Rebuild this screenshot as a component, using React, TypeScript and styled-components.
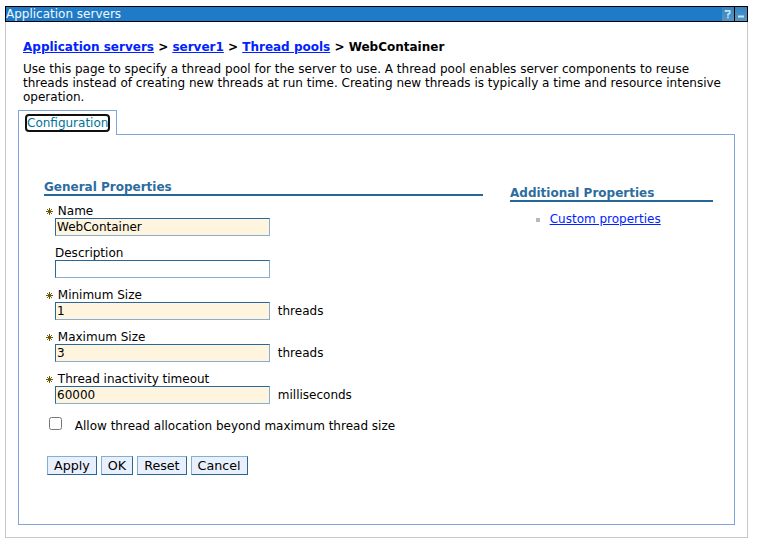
import React from "react";
import styled, { createGlobalStyle } from "styled-components";

const GlobalStyle = createGlobalStyle`
  * { box-sizing: border-box; }
  body {
    margin: 0;
    background: #fff;
    color: #000;
    font: 12px/14px "DejaVu Sans", Verdana, sans-serif;
  }
`;

const Page = styled.div`
  width: 757px;
  height: 547px;
  padding: 6px 9px 9px 5px;
  overflow: hidden;
`;

const Portlet = styled.section`
  height: 532px;
  display: flex;
  flex-direction: column;
`;

const TitleBar = styled.header`
  height: 16px;
  flex: none;
  display: flex;
  border: 1px solid #000;
  background: #1f7bc7;
  color: #f2f8fc;
`;

const Title = styled.span`
  flex: 1;
  line-height: 14px;
`;

const TitleButton = styled.span<{ $divided?: boolean }>`
  width: ${(p) => (p.$divided ? 13 : 12)}px;
  height: 14px;
  display: block;
  border-left: ${(p) => (p.$divided ? "1px solid #000" : "0")};
  background: linear-gradient(#3683c0, #5496c6);
  svg { display: block; }
`;

const Body = styled.div`
  flex: 1;
  padding: 18px 12px 12px;
  border: 1px solid #c8c8c8;
  border-top: 0;
  display: flex;
  flex-direction: column;
`;

const Breadcrumb = styled.nav`
  padding-left: 5px;
  font-weight: bold;
`;

const Link = styled.a`
  color: #0022ff;
  text-decoration: underline;
`;

const Intro = styled.p`
  margin: 8px 8px 6px 5px;
`;

const TabRow = styled.div`
  height: 25px;
  flex: none;
  display: flex;
`;

const Tab = styled.div`
  width: 99px;
  padding: 3px 6px 0;
  border: 1px solid #7ea6d9;
  border-bottom: 0;
`;

const TabLabel = styled.a`
  display: block;
  width: 85px;
  height: 18px;
  border: 2px solid #101010;
  border-radius: 4px;
  color: #007399;
  white-space: nowrap;
`;

const TabRest = styled.div`
  flex: 1;
  border-bottom: 1px solid #7ea6d9;
`;

const Panel = styled.div`
  flex: 1;
  display: flex;
  align-items: flex-start;
  gap: 27px;
  padding: 45px 21px 0 25px;
  border: 1px solid #7ea6d9;
  border-top: 0;
`;

const Heading = styled.h2`
  margin: 0;
  height: 16px;
  border-bottom: 2px solid #26689a;
  color: #2c6c9f;
  font-size: 12px;
  line-height: 14px;
`;

const General = styled.form`
  width: 439px;
`;

const Additional = styled.aside`
  width: 203px;
  margin-top: 6px;
`;

const Fields = styled.div`
  display: grid;
  gap: 10px;
  margin-top: 8px;
`;

const Label = styled.label<{ $required?: boolean }>`
  height: 14px;
  display: flex;
  padding-left: ${(p) => (p.$required ? 2 : 11)}px;
  gap: 4.8px;
  svg { margin-top: 4px; flex: none; }
`;

const Control = styled.div`
  display: flex;
  padding-left: 11px;
  gap: 7.8px;
  line-height: 18px;
`;

const Input = styled.input<{ $required?: boolean }>`
  width: 215px;
  height: 18px;
  padding: 0 1px;
  border: 1px solid;
  border-color: #26689a #86afcf #86afcf #26689a;
  border-radius: 0;
  outline: 0;
  background: ${(p) => (p.$required ? "#fff4de" : "#fff")};
  color: #000;
  font: inherit;
`;

const CheckRow = styled.label`
  display: flex;
  align-items: flex-start;
  margin: 13px 0 0 5px;
  gap: 12.8px;
  span { padding-top: 2px; }
`;

const Checkbox = styled.input`
  width: 13px;
  height: 13px;
  margin: 0;
`;

const Actions = styled.div`
  display: flex;
  gap: 4px;
  margin: 23px 0 0 3px;
`;

const Button = styled.button`
  height: 19px;
  padding: 0 6px;
  border: 1px solid;
  border-color: #86afcf #26689a #26689a #86afcf;
  border-radius: 0;
  background: #e8effd;
  color: #000;
  font: 12.7px/15px "DejaVu Sans", Verdana, sans-serif;
`;

const Item = styled.div`
  display: flex;
  align-items: center;
  gap: 9.7px;
  margin: 10px 0 0 26px;
`;

const Bullet = styled.span`
  width: 4px;
  height: 4px;
  margin-top: 2px;
  background: #b9b9b9;
`;

const RequiredMark = () => (
  <svg width="7" height="7" viewBox="0 0 7 7" shapeRendering="crispEdges">
    <path d="M1 1h1v1h-1zM5 1h1v1h-1zM1 5h1v1h-1zM5 5h1v1h-1zM2 2h3v3h-3z" fill="#7a6114" />
    <path d="M3 0h1v7h-1zM0 3h7v1h-7z" fill="#705400" />
  </svg>
);

interface FieldData {
  label: string;
  value: string;
  unit?: string;
  required?: boolean;
}

const fields: FieldData[] = [
  { label: "Name", value: "WebContainer", required: true },
  { label: "Description", value: "" },
  { label: "Minimum Size", value: "1", unit: "threads", required: true },
  { label: "Maximum Size", value: "3", unit: "threads", required: true },
  { label: "Thread inactivity timeout", value: "60000", unit: "milliseconds", required: true },
];

const Field = ({ label, value, unit, required }: FieldData) => (
  <div>
    <Label $required={required}>
      {required && <RequiredMark />}
      {label}
    </Label>
    <Control>
      <Input $required={required} defaultValue={value} aria-label={label} />
      {unit}
    </Control>
  </div>
);

export default function App() {
  return (
    <Page>
      <GlobalStyle />
      <Portlet>
        <TitleBar>
          <Title>Application servers</Title>
          <TitleButton>
            <svg width="12" height="14" viewBox="0 0 12 14">
              <path d="M3.7 5V3.9h4v2.4L6 7.4v1.4M6 9.6v1.6" stroke="#c0dff0" strokeWidth="1.8" fill="none" />
            </svg>
          </TitleButton>
          <TitleButton $divided>
            <svg width="12" height="14" viewBox="0 0 12 14">
              <path d="M3 8.5h6v2H3z" fill="#c8e6f5" />
            </svg>
          </TitleButton>
        </TitleBar>
        <Body>
          <Breadcrumb>
            <Link>Application servers</Link> &gt; <Link>server1</Link> &gt; <Link>Thread pools</Link> &gt; WebContainer
          </Breadcrumb>
          <Intro>
            Use this page to specify a thread pool for the server to use. A thread pool enables server components to reuse
            threads instead of creating new threads at run time. Creating new threads is typically a time and resource
            intensive operation.
          </Intro>
          <TabRow>
            <Tab>
              <TabLabel>Configuration</TabLabel>
            </Tab>
            <TabRest />
          </TabRow>
          <Panel>
            <General>
              <Heading>General Properties</Heading>
              <Fields>
                {fields.map((f) => (
                  <Field key={f.label} {...f} />
                ))}
              </Fields>
              <CheckRow>
                <Checkbox type="checkbox" />
                <span>Allow thread allocation beyond maximum thread size</span>
              </CheckRow>
              <Actions>
                {["Apply", "OK", "Reset", "Cancel"].map((name) => (
                  <Button key={name} type="button">
                    {name}
                  </Button>
                ))}
              </Actions>
            </General>
            <Additional>
              <Heading>Additional Properties</Heading>
              <Item>
                <Bullet />
                <Link>Custom properties</Link>
              </Item>
            </Additional>
          </Panel>
        </Body>
      </Portlet>
    </Page>
  );
}
